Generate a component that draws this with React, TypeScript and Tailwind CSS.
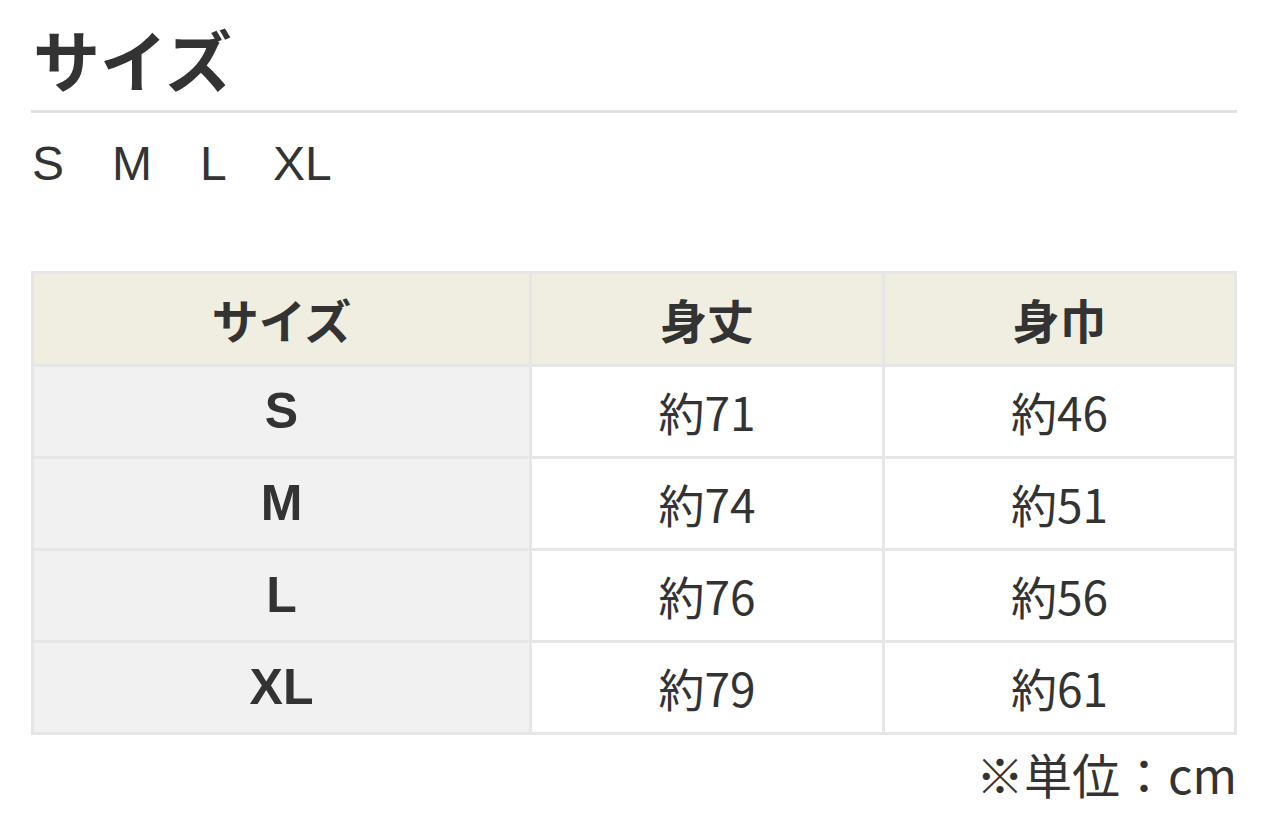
import React from "react";

const rows = [
  { s: "S", h: "約71", w: "約46" },
  { s: "M", h: "約74", w: "約51" },
  { s: "L", h: "約76", w: "約56" },
  { s: "XL", h: "約79", w: "約61" },
];

const latin = '"Liberation Sans", "Noto Sans CJK JP", sans-serif';

export default function App() {
  return (
    <div
      className="w-[1280px] h-[823px] bg-white text-[#333] overflow-hidden pl-[31px] pt-[14px]"
      style={{ fontFamily: '"Noto Sans CJK JP", "Noto Sans", sans-serif' }}
    >
      <div className="w-[1206px]">
        <h2 className="text-[67px] font-bold leading-[88px] pl-[2px]">サイズ</h2>
        <div className="h-[3px] bg-[#e2e2e2] mt-[8px]" />
        <p className="text-[48px] leading-[60px] mt-[21px] pl-[1px]" style={{ fontFamily: latin }}>
          S　M　L　XL
        </p>
        <table className="mt-[77px] w-[1206px] border-collapse border-[3px] border-[#e6e6e6] table-fixed">
          <colgroup>
            <col className="w-[498px]" />
            <col className="w-[353px]" />
            <col />
          </colgroup>
          <thead>
            <tr className="h-[93px] bg-[#efeee0]">
              <th className="border-[3px] border-[#e6e6e6] text-[47px] font-bold">サイズ</th>
              <th className="border-[3px] border-[#e6e6e6] text-[47px] font-bold">身丈</th>
              <th className="border-[3px] border-[#e6e6e6] text-[47px] font-bold">身巾</th>
            </tr>
          </thead>
          <tbody>
            {rows.map((r) => (
              <tr key={r.s} className="h-[92px]">
                <td
                  className="border-[3px] border-[#e6e6e6] bg-[#f1f1f1] text-center text-[50px] font-bold"
                  style={{ fontFamily: latin }}
                >
                  {r.s}
                </td>
                <td className="border-[3px] border-[#e6e6e6] text-center text-[46px]">{r.h}</td>
                <td className="border-[3px] border-[#e6e6e6] text-center text-[46px]">{r.w}</td>
              </tr>
            ))}
          </tbody>
        </table>
        <p className="text-right text-[48px] leading-[64px] mt-[6px]">※単位：cm</p>
      </div>
    </div>
  );
}
